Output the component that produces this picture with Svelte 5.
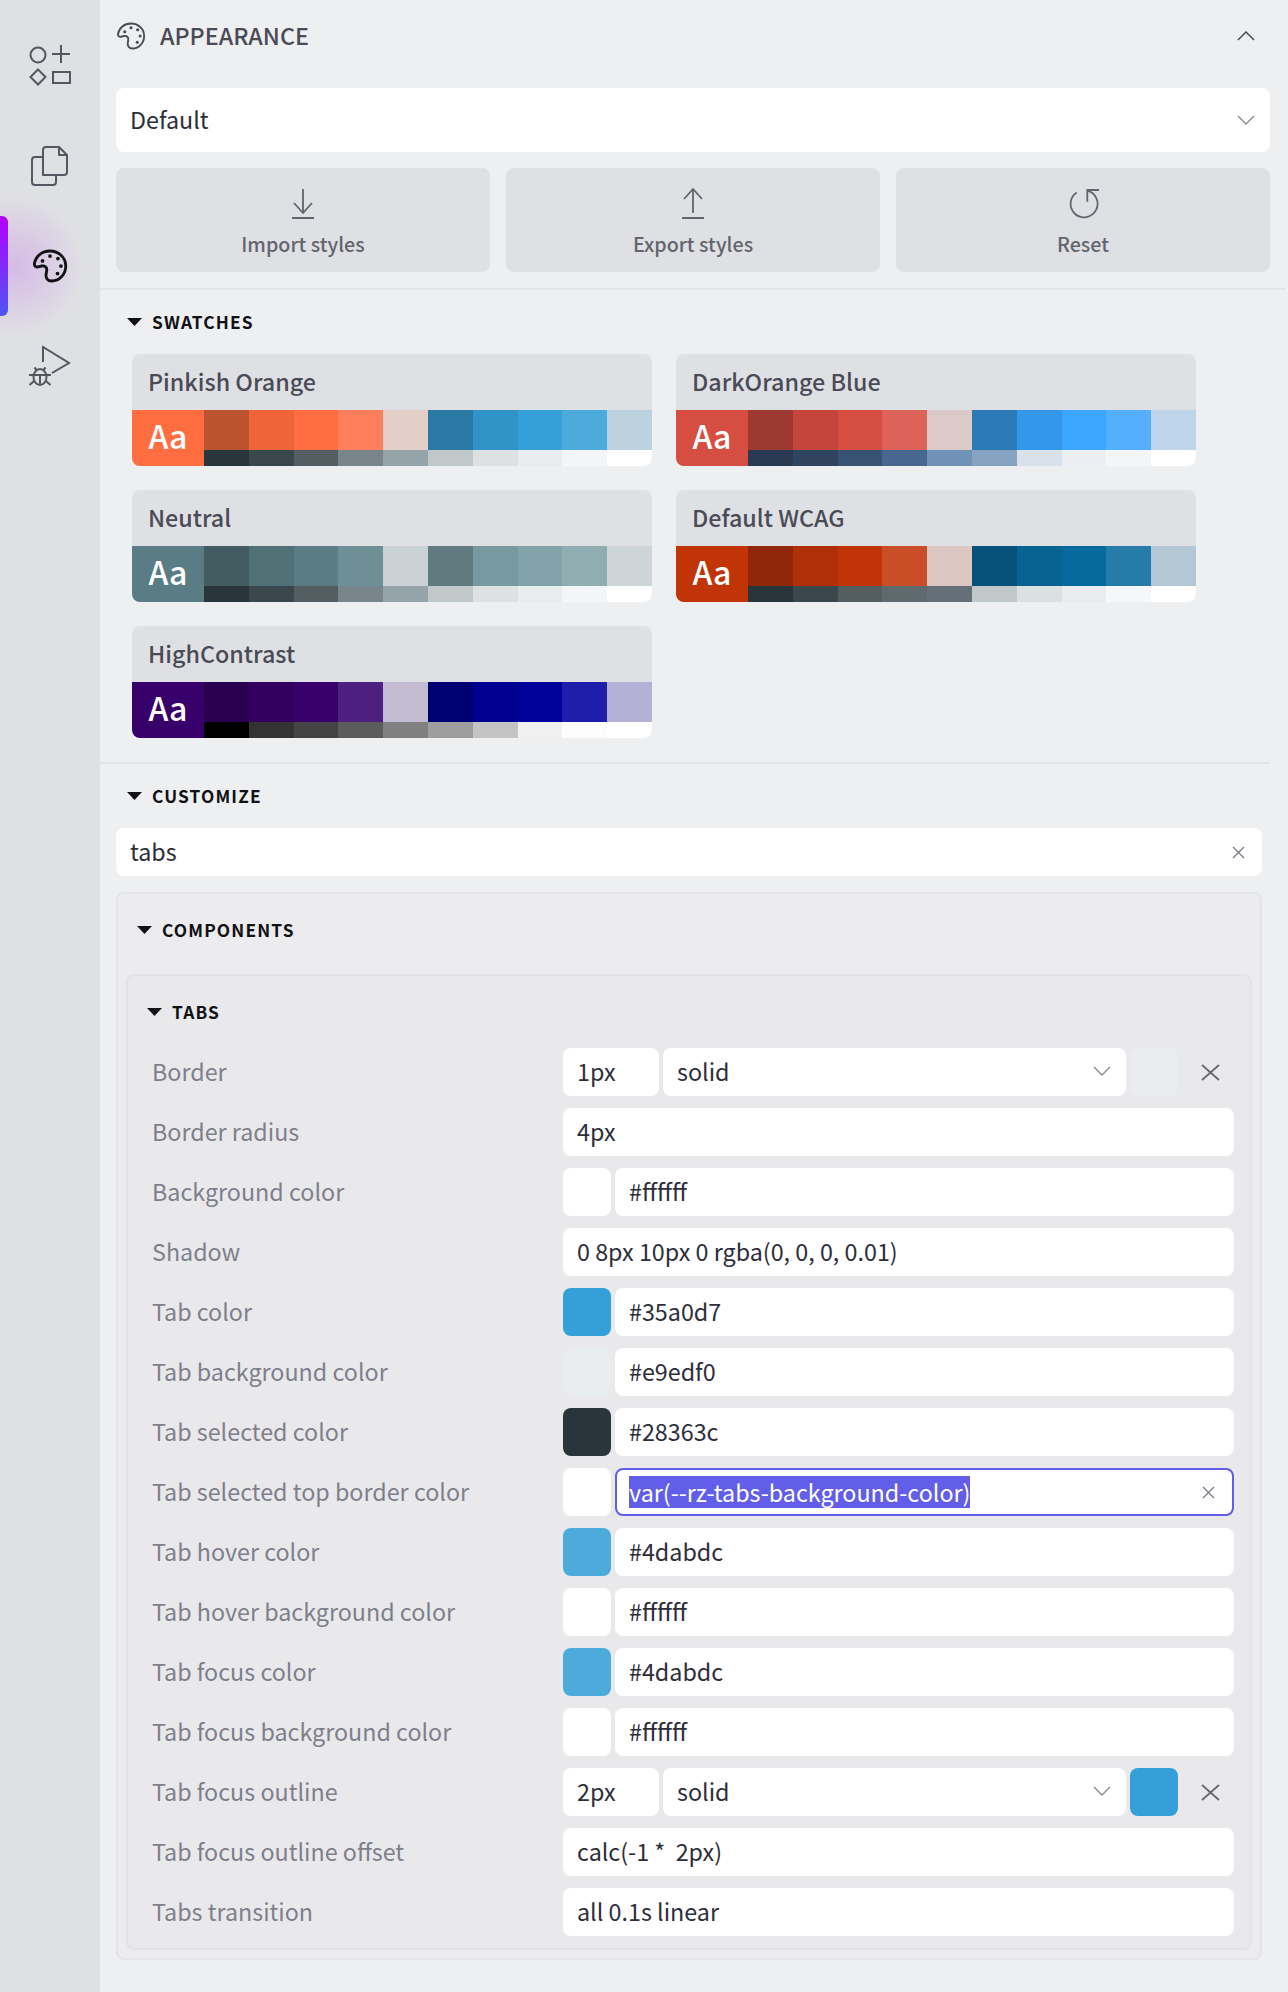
<script lang="ts">
  const grayBottom = ['#28363c', '#3a474d', '#545d62', '#78858a', '#95a4a8', '#c1c8c9', '#dde1e2', '#e9edf0', '#f4f5f9', '#ffffff'];

  const swatches = [
    {
      name: 'Pinkish Orange',
      main: '#ff6d41',
      top: ['#bb532e', '#ef6539', '#ff6d41', '#ff7f5d', '#e3cfc8', '#2a78a4', '#3293c9', '#35a0d7', '#4dabdc', '#bdd2df'],
      bottom: grayBottom
    },
    {
      name: 'DarkOrange Blue',
      main: '#d64d42',
      top: ['#9e3932', '#c5453c', '#d64d42', '#dd635a', '#dcc9ca', '#2d7ab9', '#3498ea', '#3ba5ff', '#54b0ff', '#bfd5e9'],
      bottom: ['#2a3a52', '#30435f', '#385273', '#476791', '#7092b6', '#87a3c2', '#d9e1ea', '#ebeff3', '#f4f5f7', '#ffffff']
    },
    {
      name: 'Neutral',
      main: '#5a7d85',
      top: ['#425c61', '#517177', '#5a7d85', '#6e8f96', '#cbd2d5', '#607a7f', '#779aa0', '#82a3aa', '#90aeb2', '#cdd5d8'],
      bottom: grayBottom
    },
    {
      name: 'Default WCAG',
      main: '#c13408',
      top: ['#91270a', '#b12f08', '#c13408', '#c94d26', '#dbc6c1', '#05517a', '#086392', '#066a9e', '#257ca9', '#b3c8d4'],
      bottom: ['#28363c', '#3a474d', '#545d60', '#5f6a6f', '#646e76', '#c1c8c9', '#dbe0e2', '#e9edf0', '#f5f7fa', '#ffffff']
    },
    {
      name: 'HighContrast',
      main: '#38006b',
      top: ['#2a0050', '#330060', '#38006b', '#4d1f7f', '#c3bbd1', '#000073', '#000090', '#00009b', '#1e1eaa', '#b3b1d5'],
      bottom: ['#000000', '#333333', '#444444', '#5c5c5c', '#808080', '#9e9e9e', '#c4c4c4', '#f0f0f0', '#fcfcfc', '#ffffff']
    }
  ];

  // kind: text = one input, color = swatch + input, border = width + style + color + clear
  const rows = [
    { label: 'Border', kind: 'border', width: '1px', style: 'solid', color: '#e9edf0' },
    { label: 'Border radius', kind: 'text', value: '4px' },
    { label: 'Background color', kind: 'color', value: '#ffffff', color: '#ffffff' },
    { label: 'Shadow', kind: 'text', value: '0 8px 10px 0 rgba(0, 0, 0, 0.01)' },
    { label: 'Tab color', kind: 'color', value: '#35a0d7', color: '#35a0d7' },
    { label: 'Tab background color', kind: 'color', value: '#e9edf0', color: '#e9edf0' },
    { label: 'Tab selected color', kind: 'color', value: '#28363c', color: '#28363c' },
    { label: 'Tab selected top border color', kind: 'color', value: 'var(--rz-tabs-background-color)', color: '#ffffff', focused: true },
    { label: 'Tab hover color', kind: 'color', value: '#4dabdc', color: '#4dabdc' },
    { label: 'Tab hover background color', kind: 'color', value: '#ffffff', color: '#ffffff' },
    { label: 'Tab focus color', kind: 'color', value: '#4dabdc', color: '#4dabdc' },
    { label: 'Tab focus background color', kind: 'color', value: '#ffffff', color: '#ffffff' },
    { label: 'Tab focus outline', kind: 'border', width: '2px', style: 'solid', color: '#35a0d7' },
    { label: 'Tab focus outline offset', kind: 'text', value: 'calc(-1 *  2px)' },
    { label: 'Tabs transition', kind: 'text', value: 'all 0.1s linear' }
  ];
</script>

{#snippet palette(weight)}
  <path d="M12 2C6.5 2 2.4 5.5 1.6 10.5C1.400 12 2.600 13 4 12.600L6.500 12C8.500 11.600 10.200 13 9.800 15L9.400 17.500C9 20 10.500 22 13 22C18.500 22 22.500 17.500 22.500 12C22.500 6.500 18 2 12 2Z" fill="none" stroke="currentColor" stroke-width={weight} stroke-linejoin="round" />
  <circle cx="7" cy="8.600" r="1.250" fill="currentColor" />
  <circle cx="12" cy="5.400" r="1.250" fill="currentColor" />
  <circle cx="17.300" cy="7" r="1.250" fill="currentColor" />
  <circle cx="19.300" cy="12" r="1.250" fill="currentColor" />
  <circle cx="17" cy="17" r="1.250" fill="currentColor" />
{/snippet}

{#snippet chevronDown()}
  <svg class="chevron" width="18" height="10" viewBox="0 0 18 10"><path d="M1 1l8 8 8-8" fill="none" stroke="currentColor" stroke-width="1.400" /></svg>
{/snippet}

{#snippet triangle()}
  <svg class="caret" width="15" height="8" viewBox="0 0 15 8"><path d="M0 0h15L7.500 8z" fill="currentColor" /></svg>
{/snippet}

<div class="page">
  <nav class="sidebar">
    <span class="active-glow"></span>
    <span class="active-bar"></span>
    <div class="nav-item">
      <svg width="48" height="48" viewBox="0 0 48 48" fill="none" stroke="currentColor" stroke-width="2">
        <circle cx="12" cy="13" r="7.500" />
        <path d="M35 3v18M26 12h18" />
        <path d="M12 27.500l7.500 7.500-7.500 7.500-7.500-7.500z" />
        <rect x="27" y="30" width="17" height="11" />
      </svg>
    </div>
    <div class="nav-item">
      <svg width="48" height="48" viewBox="0 0 48 48" fill="none" stroke="currentColor" stroke-width="2" stroke-linejoin="round">
        <path d="M17 33h21a3 3 0 0 0 3-3V13l-8-8H20a3 3 0 0 0-3 3z" />
        <path d="M33 5v8h8" />
        <path d="M17 15H9a3 3 0 0 0-3 3v22a3 3 0 0 0 3 3h18a3 3 0 0 0 3-3v-7" />
      </svg>
    </div>
    <div class="nav-item active">
      <svg width="36" height="36" viewBox="0 0 24 24">{@render palette(1.900)}</svg>
    </div>
    <div class="nav-item">
      <svg width="48" height="48" viewBox="0 0 48 48" fill="none" stroke="currentColor" stroke-width="2">
        <path d="M17 20V5l26 16-17 10" />
        <ellipse cx="14" cy="35" rx="6.500" ry="8" />
        <path d="M8 33h12M14 33v10M8.500 25.500l2.500 3M19.500 25.500l-2.500 3M3 33h5M20 33h5M3.500 43l4.500-4M24.500 43l-4.500-4" />
      </svg>
    </div>
  </nav>

  <main class="main">
    <header class="panel-header">
      <svg class="header-icon" width="30" height="30" viewBox="0 0 24 24">{@render palette(1.500)}</svg>
      <h1>APPEARANCE</h1>
      <svg class="collapse" width="18" height="10" viewBox="0 0 18 10"><path d="M1 9l8-8 8 8" fill="none" stroke="currentColor" stroke-width="1.500" /></svg>
    </header>

    <div class="theme-select">
      <span>Default</span>
      {@render chevronDown()}
    </div>

    <div class="actions">
      <button>
        <svg width="30" height="32" viewBox="0 0 30 32" fill="none" stroke="currentColor" stroke-width="1.800">
          <path d="M15 1v24M6 15l9 10 9-10M4 30h22" />
        </svg>
        Import styles
      </button>
      <button>
        <svg width="30" height="32" viewBox="0 0 30 32" fill="none" stroke="currentColor" stroke-width="1.800">
          <path d="M15 25V1M6 11l9-10 9 10M4 30h22" />
        </svg>
        Export styles
      </button>
      <button>
        <svg width="40" height="32" viewBox="0 4 40 32" fill="none" stroke="currentColor" stroke-width="1.800">
          <path d="M24.300 6.700A13.500 13.500 0 1 1 13.700 8.500" />
          <path d="M36 6H24.300V17.700" />
        </svg>
        Reset
      </button>
    </div>

    <hr class="divider first" />

    <section>
      <div class="section-title">{@render triangle()}<span>SWATCHES</span></div>
      <div class="swatch-grid">
        {#each swatches as swatch}
          <div class="swatch">
            <div class="swatch-name">{swatch.name}</div>
            <div class="swatch-colors">
              <div class="swatch-aa" style="background: {swatch.main}">Aa</div>
              <div class="swatch-scale">
                {#each swatch.top as c}
                  <span style="background: {c}"></span>
                {/each}
                {#each swatch.bottom as c}
                  <span style="background: {c}"></span>
                {/each}
              </div>
            </div>
          </div>
        {/each}
      </div>
    </section>

    <hr class="divider" />

    <section class="customize">
      <div class="section-title">{@render triangle()}<span>CUSTOMIZE</span></div>
      <div class="field search">
        <span>tabs</span>
        <svg class="clear" width="13" height="13" viewBox="0 0 13 13"><path d="M1 1l11 11M12 1L1 12" stroke="currentColor" stroke-width="1.300" /></svg>
      </div>

      <div class="group components">
        <div class="section-title nested">{@render triangle()}<span>COMPONENTS</span></div>

        <div class="group tabs">
          <div class="section-title tabs-title">{@render triangle()}<span>TABS</span></div>
          <div class="props">
            {#each rows as row}
              <div class="prop">
                <span class="prop-label">{row.label}</span>
                <div class="prop-inputs">
                  {#if row.kind === 'border'}
                    <div class="field size">{row.width}</div>
                    <div class="field border-style">
                      <span>{row.style}</span>
                      {@render chevronDown()}
                    </div>
                    <span class="color-chip" style="background: {row.color}"></span>
                    <svg class="remove" width="19" height="17" viewBox="0 0 19 17"><path d="M1 1l17 15M18 1L1 16" stroke="currentColor" stroke-width="1.700" /></svg>
                  {:else if row.kind === 'color'}
                    <span class="color-chip" style="background: {row.color}"></span>
                    {#if row.focused}
                      <div class="field grow focused">
                        <span class="selected">{row.value}</span>
                        <svg class="clear" width="13" height="13" viewBox="0 0 13 13"><path d="M1 1l11 11M12 1L1 12" stroke="currentColor" stroke-width="1.300" /></svg>
                      </div>
                    {:else}
                      <div class="field grow">{row.value}</div>
                    {/if}
                  {:else}
                    <div class="field grow">{row.value}</div>
                  {/if}
                </div>
              </div>
            {/each}
          </div>
        </div>
      </div>
    </section>
  </main>
</div>

<style>
  :global(body) {
    margin: 0;
    background: #eeeff1;
  }

  .page {
    display: flex;
    min-height: 1992px;
    font-family: "Noto Sans CJK SC", "Noto Sans", sans-serif;
    font-size: 23.3px;
    color: #2e2e3a;
  }

  .sidebar {
    position: relative;
    flex: 0 0 100px;
    padding-top: 16px;
    box-sizing: border-box;
    background: #dfe0e4;
    overflow: hidden;
  }

  .active-glow {
    position: absolute;
    left: -56px;
    top: 196px;
    width: 140px;
    height: 140px;
    background: radial-gradient(closest-side, rgba(188, 84, 232, 0.28), rgba(188, 84, 232, 0));
  }

  .active-bar {
    position: absolute;
    left: 0;
    top: 216px;
    width: 8px;
    height: 100px;
    border-radius: 0 6px 6px 0;
    background: linear-gradient(180deg, #b400ff, #4f55f0);
  }

  .nav-item {
    position: relative;
    display: flex;
    align-items: center;
    justify-content: center;
    height: 100px;
    color: #55565f;
  }

  .nav-item.active {
    color: #111116;
  }

  .main {
    flex: 1;
    min-width: 0;
    padding: 0 18px 0 16px;
  }

  .panel-header {
    display: flex;
    align-items: center;
    height: 72px;
    margin-bottom: 16px;
    color: #4a4b57;
  }

  .header-icon {
    margin-right: 14px;
  }

  h1 {
    flex: 1;
    margin: 0;
    font-size: 23.3px;
    line-height: 30px;
    font-weight: 500;
    padding-bottom: 2px;
  }

  .collapse {
    margin-right: 15px;
  }

  .theme-select {
    display: flex;
    align-items: center;
    justify-content: space-between;
    height: 64px;
    padding: 0 15px 0 14px;
    border-radius: 8px;
    background: #fff;
  }

  .theme-select span {
    padding-bottom: 2px;
  }

  .chevron {
    color: #8a8a94;
  }

  .actions {
    display: grid;
    grid-template-columns: repeat(3, 1fr);
    gap: 16px;
    margin-top: 16px;
  }

  .actions button {
    display: flex;
    flex-direction: column;
    align-items: center;
    gap: 10px;
    height: 104px;
    padding: 20px 0 0;
    border: 0;
    border-radius: 8px;
    background: #dfe0e4;
    color: #63646e;
    font: inherit;
    font-size: 19.700px;
    line-height: 28px;
    font-weight: 500;
  }

  .divider {
    height: 2px;
    margin: 16px 0 0 -16px;
    border: 0;
    background: #e3e4e7;
  }

  .divider.first {
    margin-right: -16px;
  }

  section > .section-title {
    margin: 22px 0;
    padding-left: 11px;
  }

  section + .divider {
    margin-top: 24px;
  }

  .section-title {
    display: flex;
    align-items: center;
    gap: 10px;
    height: 20px;
    font-size: 17.300px;
    line-height: 20px;
    font-weight: 700;
    letter-spacing: 1.150px;
    color: #111116;
  }

  .caret {
    flex: none;
  }

  .swatch-grid {
    display: grid;
    grid-template-columns: 520px 520px;
    gap: 24px;
    padding-left: 16px;
  }

  .swatch {
    height: 112px;
    border-radius: 8px;
    overflow: hidden;
    background: #dfe0e4;
  }

  .swatch-name {
    height: 56px;
    padding-left: 16px;
    line-height: 55px;
    font-weight: 500;
    color: #4a4b57;
  }

  .swatch-colors {
    display: flex;
    height: 56px;
  }

  .swatch-aa {
    flex: 0 0 72px;
    color: #fff;
    font-size: 32px;
    line-height: 50px;
    text-align: center;
    font-weight: 500;
  }

  .swatch-scale {
    flex: 1;
    display: grid;
    grid-template-columns: repeat(10, 1fr);
    grid-template-rows: 40px 16px;
  }

  .customize {
    margin-right: 8px;
  }

  .group {
    box-sizing: border-box;
    border: 2px solid #e3e4e7;
    border-radius: 8px;
  }

  .components {
    margin-top: 16px;
    padding: 26px 8px 8px;
    background: #ececee;
  }

  .tabs {
    margin-top: 34px;
    padding: 26px 16px 12px 24px;
    background: #e9e9eb;
    border-color: #e2e3e6;
  }

  .nested {
    padding-left: 11px;
  }

  .tabs-title {
    margin-left: -5px;
  }

  .props {
    display: grid;
    gap: 12px;
    margin-top: 26px;
  }

  .prop {
    display: grid;
    grid-template-columns: 411px 1fr;
    align-items: center;
  }

  .prop-label {
    color: #7f7f8c;
    padding-bottom: 2px;
  }

  .prop-inputs {
    display: flex;
    align-items: center;
    gap: 4px;
  }

  .field {
    display: flex;
    align-items: center;
    box-sizing: border-box;
    height: 48px;
    padding: 0 14px 2px;
    border-radius: 8px;
    background: #fff;
    line-height: 32px;
    white-space: pre;
  }

  .search {
    justify-content: space-between;
    padding-right: 17px;
  }

  .search .clear {
    margin-top: 2px;
  }

  .grow {
    flex: 1;
  }

  .size {
    flex: 0 0 96px;
  }

  .border-style {
    flex: 0 0 463px;
    justify-content: space-between;
    padding-right: 15px;
  }

  .color-chip {
    flex: 0 0 48px;
    height: 48px;
    border-radius: 8px;
  }

  .remove {
    margin-left: 19px;
    color: #63646e;
  }

  .clear {
    color: #7a7a85;
  }

  .focused {
    justify-content: space-between;
    padding: 0 17px 0 12px;
    border: 2px solid #625ee9;
  }

  .selected {
    background: #625ee9;
    color: #fff;
  }
</style>
